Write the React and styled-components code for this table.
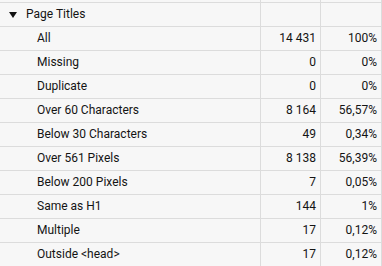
import React from "react";
import styled, { createGlobalStyle } from "styled-components";

const GlobalStyle = createGlobalStyle`
  html, body {
    margin: 0;
    padding: 0;
    background: #f7f7f7;
  }
  body {
    font-family: Roboto, "Liberation Sans", sans-serif;
    font-size: 12px;
    color: #141414;
  }
`;

const rows = [
  ["All", "14 431", "100%"],
  ["Missing", "0", "0%"],
  ["Duplicate", "0", "0%"],
  ["Over 60 Characters", "8 164", "56,57%"],
  ["Below 30 Characters", "49", "0,34%"],
  ["Over 561 Pixels", "8 138", "56,39%"],
  ["Below 200 Pixels", "7", "0,05%"],
  ["Same as H1", "144", "1%"],
  ["Multiple", "17", "0,12%"],
  ["Outside <head>", "17", "0,12%"],
];

const Table = styled.div`
  display: grid;
  grid-template-columns: 261px 60px 61px;
  width: 382px;
  background: #f7f7f7;
`;

const Cell = styled.div`
  box-sizing: border-box;
  height: ${(p) => (p.$spacer ? "3px" : "24px")};
  border-right: 1px solid #dcdcdc;
  border-bottom: 1px solid #dcdcdc;
  display: flex;
  align-items: center;
  justify-content: ${(p) => (p.$num ? "flex-end" : "flex-start")};
  padding: ${(p) => (p.$num ? "0 4px 1px 0" : `0 0 1px ${p.$indent || 0}px`)};
  white-space: nowrap;
  overflow: hidden;
`;

const Caret = styled.span`
  width: 0;
  height: 0;
  border-left: 4px solid transparent;
  border-right: 4px solid transparent;
  border-top: 6px solid #111111;
  margin: 1px 9px 0 0;
`;

export default function App() {
  return (
    <>
      <GlobalStyle />
      <Table>
        <Cell $spacer />
        <Cell $spacer />
        <Cell $spacer />

        <Cell $indent={9}>
          <Caret />
          Page Titles
        </Cell>
        <Cell $num />
        <Cell $num />

        {rows.map(([label, count, pct]) => (
          <React.Fragment key={label}>
            <Cell $indent={37}>{label}</Cell>
            <Cell $num>{count}</Cell>
            <Cell $num>{pct}</Cell>
          </React.Fragment>
        ))}
      </Table>
    </>
  );
}
